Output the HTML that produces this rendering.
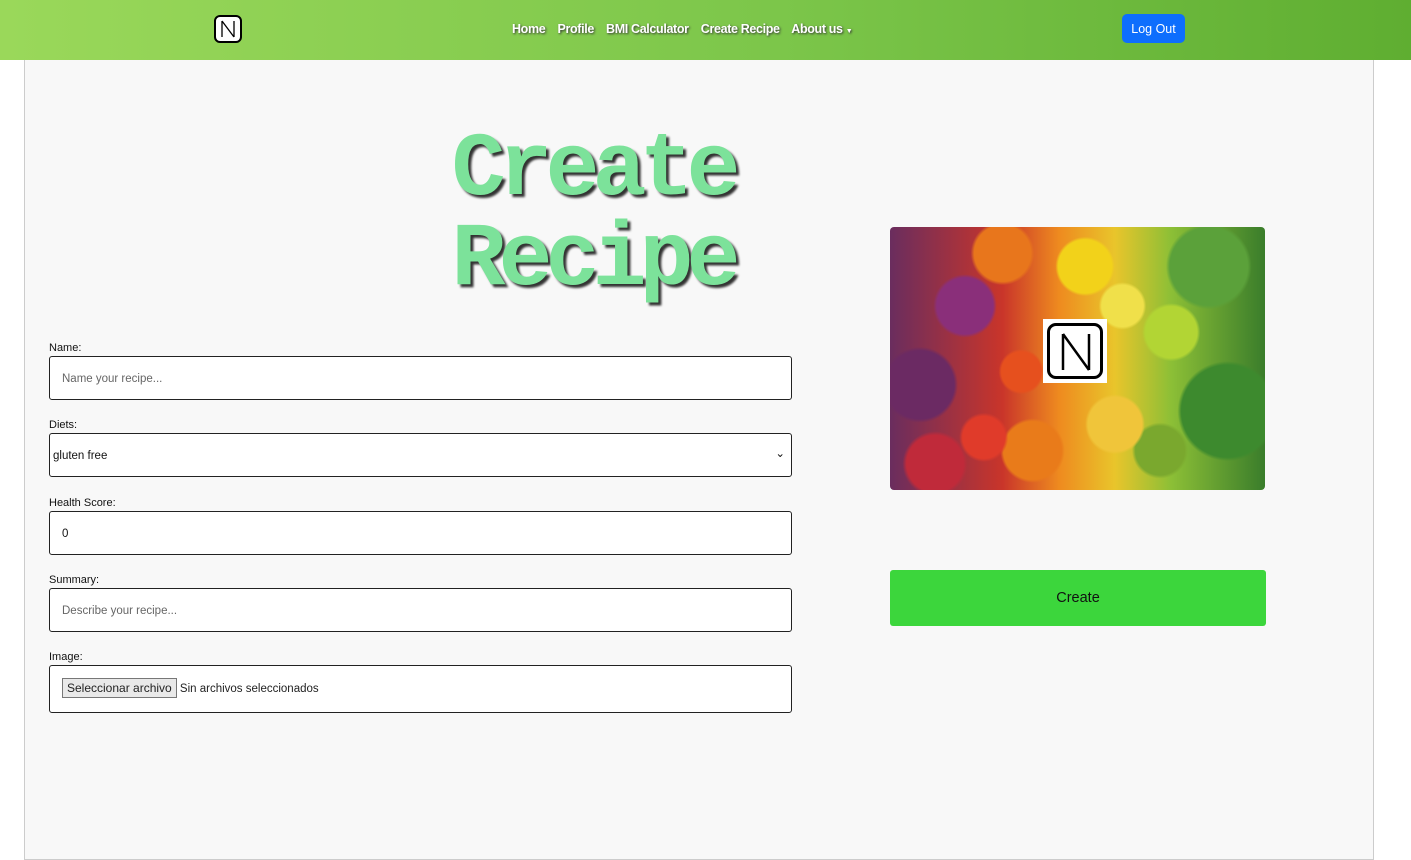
<!DOCTYPE html>
<html><head><meta charset="utf-8"><style>
*{box-sizing:border-box}
html,body{margin:0;width:1411px;height:854px;overflow:hidden;background:#fff;font-family:"Liberation Sans",sans-serif;}
.nav{position:absolute;left:0;top:0;width:1411px;height:60px;background:linear-gradient(90deg,#9ad85a,#7cc64a 55%,#5fae31);}
.logo{position:absolute;left:214px;top:15px;width:28px;height:28px;background:#fff;border:2px solid #000;border-radius:6px;}
.links{position:absolute;left:512px;top:22px;font-size:12.5px;font-weight:bold;color:#fff;text-shadow:1px 1px 2px #333;letter-spacing:-0.35px}
.links span{margin-right:9px}
.btn{position:absolute;left:1122px;top:14px;width:63px;height:29px;background:#0d6efd;color:#fff;border-radius:5px;font-size:12.5px;text-align:center;line-height:31px}
.card{position:absolute;left:24px;top:60px;width:1350px;height:800px;background:#f8f8f8;border:1px solid #ccc;border-top:none;}
h1{position:absolute;left:420px;top:126px;width:345px;margin:0;text-align:center;font-family:"Liberation Mono",monospace;font-weight:bold;font-size:90px;line-height:90px;color:#7ce29a;text-shadow:3px 3px 2px #333;letter-spacing:-7px}
label{position:absolute;left:49px;font-size:11px;color:#111;margin-top:1px}
.in{position:absolute;left:49px;width:743px;height:44px;border:1px solid #222;border-radius:3px;background:#fff;font-size:11.5px;padding-left:12px;line-height:45px;color:#666}
.img{position:absolute;left:890px;top:227px;width:375px;height:263px;border-radius:4px;overflow:hidden;
background:
radial-gradient(circle at 20% 30%,#8a2f7a 0 8%,transparent 9%),
radial-gradient(circle at 8% 60%,#6b2a63 0 9%,transparent 10%),
radial-gradient(circle at 12% 90%,#c02a3a 0 7%,transparent 8%),
radial-gradient(circle at 25% 80%,#e03b2a 0 6%,transparent 7%),
radial-gradient(circle at 35% 55%,#e6501e 0 7%,transparent 8%),
radial-gradient(circle at 30% 10%,#e8761c 0 8%,transparent 9%),
radial-gradient(circle at 38% 85%,#e97b1a 0 9%,transparent 10%),
radial-gradient(circle at 52% 15%,#f2d21a 0 9%,transparent 10%),
radial-gradient(circle at 62% 30%,#f0e04a 0 7%,transparent 8%),
radial-gradient(circle at 60% 75%,#f0c53a 0 9%,transparent 10%),
radial-gradient(circle at 75% 40%,#b2d534 0 8%,transparent 9%),
radial-gradient(circle at 72% 85%,#7aa82e 0 7%,transparent 8%),
radial-gradient(circle at 90% 70%,#3d8a2e 0 12%,transparent 13%),
radial-gradient(circle at 85% 15%,#5ba13a 0 10%,transparent 11%),
linear-gradient(90deg,#6a2d5e,#c9352a 30%,#ee8a1f 45%,#e9c52b 60%,#8cbf36 75%,#3a7d2b);}
.ilogo{position:absolute;left:153px;top:92px;width:64px;height:64px;background:#fff;padding:4px}
.ilogo div{width:100%;height:100%;border:3px solid #000;border-radius:9px}
.create{position:absolute;left:890px;top:570px;width:376px;height:56px;background:#3cd63c;border-radius:3px;text-align:center;line-height:57px;font-size:14.5px;color:#111}
</style></head><body>
<div class="nav">
<div class="logo"><svg width="24" height="24" viewBox="0 0 24 24"><path d="M6 4V20M6 4L18 20M18 4V20" stroke="#000" stroke-width="1.3" fill="none"/></svg></div>
<div class="links"><span>Home</span> <span>Profile</span> <span>BMI Calculator</span> <span>Create Recipe</span> <span>About us <small style="font-size:7px">▼</small></span></div>
<div class="btn">Log Out</div>
</div>
<div class="card"></div>
<h1>Create Recipe</h1>
<label style="top:341px">Name:</label><div class="in" style="top:356px">Name your recipe...</div>
<label style="top:418px">Diets:</label><div class="in" style="top:433px;padding-left:3px;color:#111">gluten free<span style="position:absolute;right:6px;top:-2px">⌄</span></div>
<label style="top:496px">Health Score:</label><div class="in" style="top:511px;color:#111">0</div>
<label style="top:573px">Summary:</label><div class="in" style="top:588px">Describe your recipe...</div>
<label style="top:650px">Image:</label><div class="in" style="top:665px;height:48px;color:#222;line-height:46px"><span style="display:inline-block;border:1px solid #777;background:#e9e9e9;line-height:18px;padding:0 4px;font-size:12px">Seleccionar archivo</span> Sin archivos seleccionados</div>
<div class="img"><div class="ilogo"><div><svg width="52" height="52" viewBox="0 0 52 52"><path d="M13 8V44M13 8L39 44M39 8V44" stroke="#000" stroke-width="2.5" fill="none"/></svg></div></div></div>
<div class="create">Create</div>
</body></html>
